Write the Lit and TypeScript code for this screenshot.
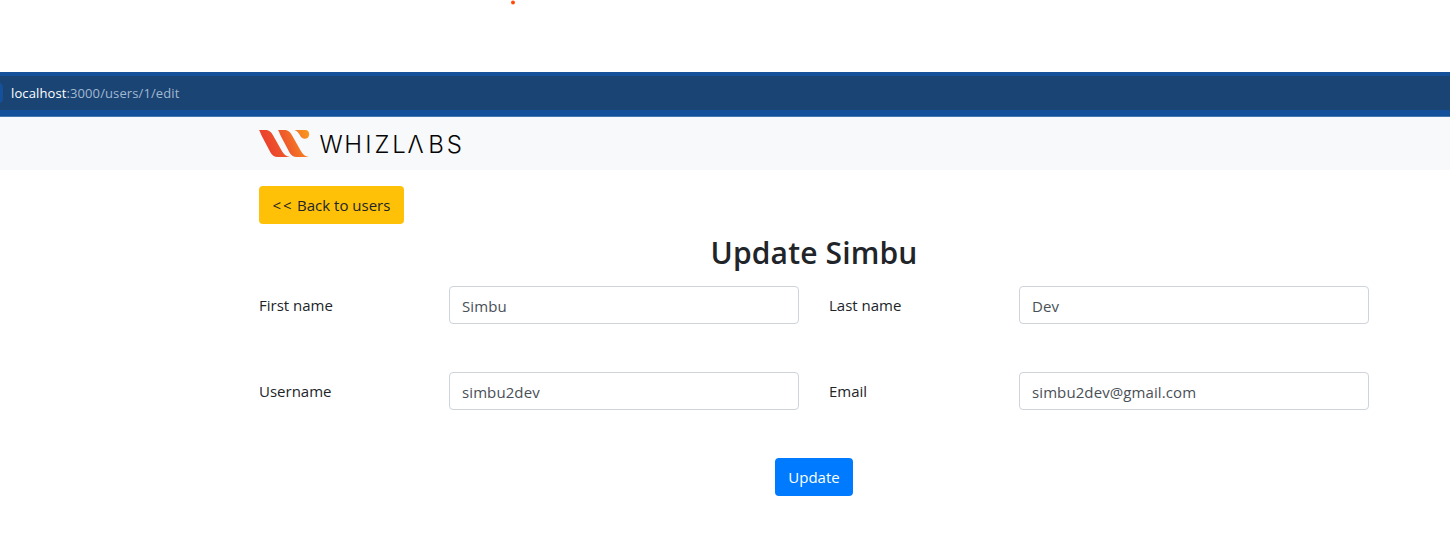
import { LitElement, html, css } from "lit";
import { customElement, property } from "lit/decorators.js";

@customElement("whizlabs-logo")
export class WhizlabsLogo extends LitElement {
  static styles = css`
    :host { display: block; width: 210px; height: 34px; }
    svg { display: block; }
    .word { font: 300 24px Inter, sans-serif; fill: #050505; }
  `;
  render() {
    return html`<svg width="210" height="34" viewBox="0 0 210 34" role="img" aria-label="Whizlabs">
      <defs>
        <linearGradient id="flame" gradientUnits="userSpaceOnUse" x1="2" y1="20" x2="50" y2="4">
          <stop offset="0" stop-color="#ea3b2f" />
          <stop offset=".5" stop-color="#ef5c2b" />
          <stop offset="1" stop-color="#fb981c" />
        </linearGradient>
      </defs>
      <g fill="url(#flame)">
        <path d="M0 3H6.500C10.500 3 12.500 5.500 14.400 9L22.600 23.500C24.600 27 27 29.600 31 30H19C15 30 13 28 11.500 25.500L2.800 9C1.600 6.500 1.200 4.800 0 3Z" />
        <path d="M19 3H25.500C29.500 3 31.500 5.500 33.400 9L41.600 23.500C43.600 27 46 29.600 50.300 30H38C34 30 32 28 30.500 25.500L21.800 9C20.600 6.500 20.200 4.800 19 3Z" />
        <path d="M35.500 3H46C49 3 50.300 5 50.200 7.400C50 10.200 48 12 45.300 11.800C40.500 11.200 41.500 5.500 35.500 3Z" />
      </g>
      <text class="word" y="26.300" x="60.500 85.200 106.300 115.500 133.300 148.500 169.300 187.800">WHIZLΛBS</text>
    </svg>`;
  }
}

@customElement("form-field")
export class FormField extends LitElement {
  @property() label = "";
  @property() value = "";
  static styles = css`
    :host { display: grid; grid-template-columns: 190px 350px; }
    .label { padding-top: 7px; line-height: 24px; }
    .input {
      box-sizing: border-box; width: 350px; height: 38px; padding: 7px 12px 5px;
      border: 1px solid #ced4da; border-radius: 4px; background: #fff;
      color: #495057; font: inherit; line-height: 24px; letter-spacing: .1px; outline: none;
    }
  `;
  render() {
    return html`<label class="label" for="field">${this.label}</label>
      <input class="input" id="field" .value=${this.value} />`;
  }
}

@customElement("app-root")
export class AppRoot extends LitElement {
  static styles = css`
    :host {
      display: block; height: 546px; overflow: hidden; background: #fff; color: #212529;
      font: 400 15px/24px "Open Sans", sans-serif;
    }
    .top { height: 72px; }
    .dot { display: block; margin-left: 511px; }
    .chrome {
      box-sizing: border-box; height: 45px; padding: 4px 0 6px; background: #14519a;
      border-bottom: 1px solid #4778b0;
    }
    .address {
      display: flex; align-items: center; height: 34px; background: #194474;
      font-size: 13px; letter-spacing: .11px; color: #a3b8d0;
    }
    .edge { width: 3px; height: 20px; margin-right: 8px; border-radius: 0 6px 6px 0 / 0 10px 10px 0; background: #14519a; }
    .host { color: #fff; }
    .nav { height: 53px; background: #f8f9fa; }
    .container { width: 1110px; margin-left: 259px; }
    .nav .container { padding-top: 10px; }
    .btn {
      display: block; box-sizing: border-box; height: 38px; padding: 0 0 1px; border: 0; border-radius: 4px;
      font: inherit; text-align: center; white-space: nowrap;
    }
    .back { width: 145px; margin-top: 16px; background: #ffc107; color: #212529; }
    .arrows { letter-spacing: 1.7px; }
    .title { margin: 10px 0 14px; font-size: 30px; line-height: 38px; font-weight: 600; text-align: center; letter-spacing: .15px; }
    .fields { display: grid; grid-template-columns: 540px 540px; gap: 48px 30px; }
    .update { width: 78px; margin: 48px auto 0; background: #007bff; color: #fff; }
  `;
  render() {
    return html`
      <div class="top">
        <svg class="dot" width="4" height="5" viewBox="0 0 4 5"><circle cx="2" cy="2.500" r="2" fill="#ff4b0a" /></svg>
      </div>
      <div class="chrome">
        <div class="address"><span class="edge"></span><span><span class="host">localhost</span>:3000/users/1/edit</span></div>
      </div>
      <nav class="nav"><div class="container"><whizlabs-logo></whizlabs-logo></div></nav>
      <main class="container">
        <button class="btn back"><span class="arrows">&lt;&lt;</span> Back to users</button>
        <h2 class="title">Update Simbu</h2>
        <div class="fields">
          <form-field label="First name" value="Simbu"></form-field>
          <form-field label="Last name" value="Dev"></form-field>
          <form-field label="Username" value="simbu2dev"></form-field>
          <form-field label="Email" value="simbu2dev@gmail.com"></form-field>
        </div>
        <button class="btn update">Update</button>
      </main>
    `;
  }
}
